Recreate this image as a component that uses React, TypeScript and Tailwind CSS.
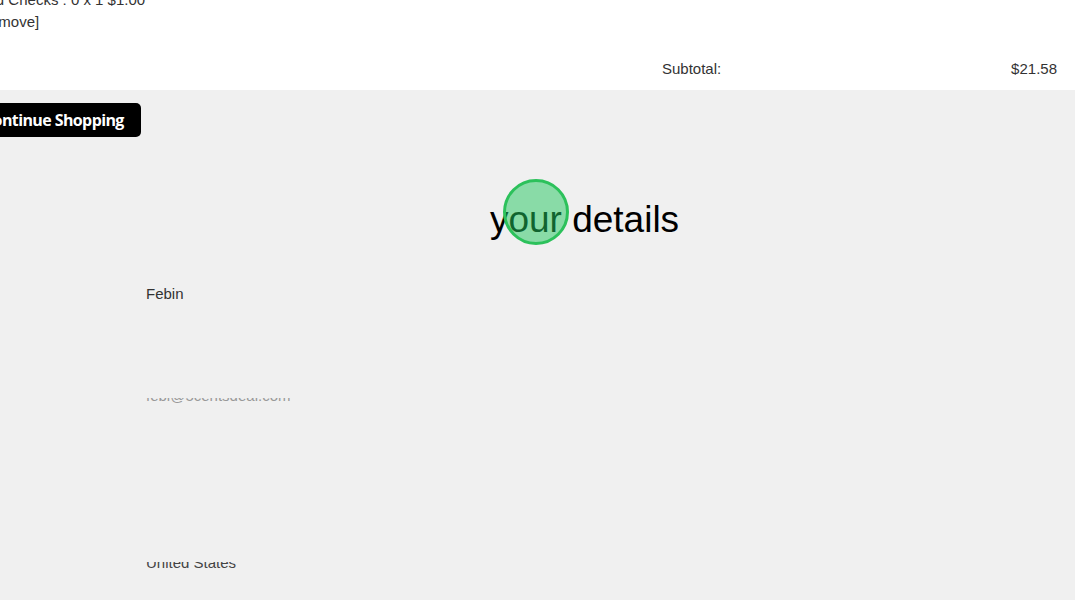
export default function App() {
  return (
    <div className="relative min-h-screen overflow-hidden bg-[#f0f0f0] font-['Liberation_Sans',Arial,sans-serif] text-[15px] leading-[22px] text-[#333]">
      {/* cart summary */}
      <section className="flow-root h-[90px] bg-white">
        <div className="-mt-[11px] -ml-[25px] whitespace-nowrap">
          <div>Void Checks : 0 x 1 $1.00</div>
          <div>[Remove]</div>
        </div>
        <div className="mt-[25px] ml-auto mr-[18px] flex w-[395px] justify-between">
          <span>Subtotal:</span>
          <span>$21.58</span>
        </div>
      </section>

      <div className="mt-[13px] -ml-[34px]">
        <button className="h-[34px] rounded-[5px] bg-black px-[17px] font-['Open_Sans',sans-serif] text-[16px] font-bold tracking-[-0.6px] text-white">
          Continue Shopping
        </button>
      </div>

      <h1 className="mt-[62px] flex justify-center pl-[94px] text-[37px] leading-[42px] text-black">
        your details
      </h1>

      <form className="mt-[42px] pl-[146px]">
        <div>Febin</div>
        <div className="mt-[93px] h-[6px] overflow-hidden text-[#999]">
          <div className="-mt-[13px]">febi@5centsdeal.com</div>
        </div>
        <div className="mt-[158px] h-[7px] overflow-hidden text-[#444]">
          <div className="-mt-[10px]">United States</div>
        </div>
      </form>

      {/* click marker */}
      <div className="absolute left-[503px] top-[179px] h-[66px] w-[66px] rounded-full border-[3px] border-[#2cc15b] bg-[rgba(34,197,94,0.5)]" />
    </div>
  );
}
